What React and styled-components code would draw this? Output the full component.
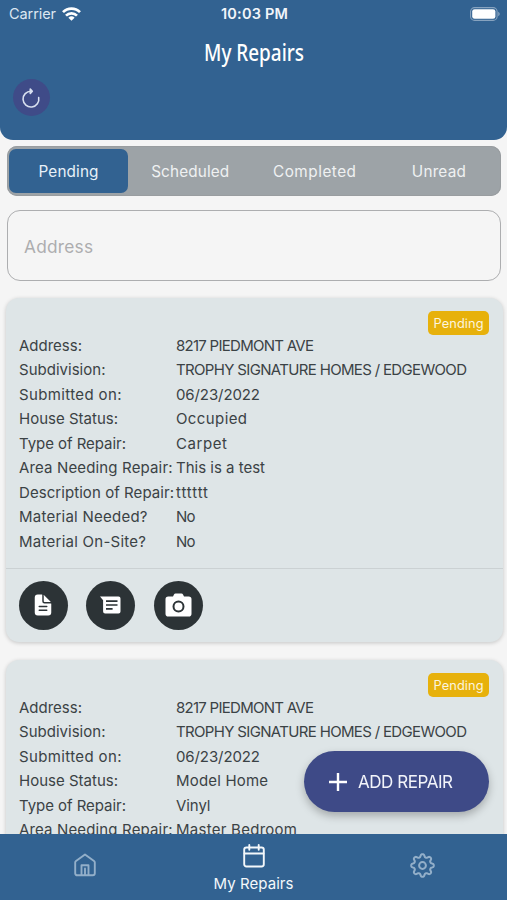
import React, { useLayoutEffect, useRef, useState } from "react";
import styled, { createGlobalStyle } from "styled-components";
import { IoDocumentText } from "react-icons/io5";

const Global = createGlobalStyle`
  * { box-sizing: border-box; }
  html, body { margin: 0; padding: 0; }
  body { background: #f5f5f5; font-family: Inter, "Liberation Sans", sans-serif; overflow: hidden; }
  button { font: inherit; border: 0; padding: 0; background: none; color: inherit; cursor: pointer; }
`;

const FitSpan = styled.span`
  display: inline-block;
  white-space: nowrap;
  transform-origin: 0 50%;
`;

/* Tracks or condenses a label so that it fills the given width. */
function Fit({ width, condense, children }) {
  const ref = useRef(null);
  const [style, setStyle] = useState({});
  useLayoutEffect(() => {
    const natural = ref.current.getBoundingClientRect().width;
    if (condense) {
      setStyle({ transform: `scaleX(${width / natural})`, marginRight: width - natural });
    } else {
      const gap = (width - natural) / (String(children).length - 1);
      setStyle({ letterSpacing: gap, marginRight: -gap });
    }
  }, [width, condense, children]);
  return <FitSpan ref={ref} style={style}>{children}</FitSpan>;
}

const Screen = styled.div`
  width: 507px;
  height: 900px;
  display: flex;
  flex-direction: column;
  overflow: hidden;
  background: #f5f5f5;
`;

const Header = styled.header`
  height: 140px;
  flex: none;
  background: #326291;
  color: #fff;
  border-radius: 0 0 13px 13px;
`;

const StatusBar = styled.div`
  display: grid;
  grid-template-columns: 1fr auto 1fr;
  align-items: center;
  height: 28px;
  padding: 0 7px 0 9px;
  font-size: 14.5px;
  line-height: 28px;
`;

const Carrier = styled.div`
  display: flex;
  align-items: center;
  gap: 6px;
  color: #dce7f1;
`;

const Clock = styled.div`
  font-weight: 600;
  color: #f1f5fa;
`;

const BatterySlot = styled.div`
  display: flex;
  justify-content: flex-end;
`;

const Title = styled.h1`
  margin: 6px 0 0;
  height: 37px;
  font: 500 23.5px/36px "Noto Sans", sans-serif;
  text-align: center;
`;

const RefreshButton = styled.button`
  display: flex;
  align-items: center;
  justify-content: center;
  width: 37px;
  height: 37px;
  margin: 8px 0 0 13px;
  padding-right: 1px;
  border-radius: 50%;
  background: #3f4b88;
`;

const Tabs = styled.nav`
  flex: none;
  display: grid;
  grid-template-columns: 119px repeat(3, 1fr);
  height: 50px;
  margin: 6px 6px 0 7px;
  padding: 3px 0 3px 2px;
  border-radius: 10px;
  background: #9da3a7;
  box-shadow: inset 0 0 0 1px #999da0;
`;

const Tab = styled.button`
  height: 44px;
  border-radius: 7px;
  color: ${(p) => (p.$active ? "#e8f1f8" : "#eff1f2")};
  background: ${(p) => (p.$active ? "#326291" : "transparent")};
  font-size: 15.3px;
  line-height: 45px;
`;

const SearchField = styled.div`
  flex: none;
  display: flex;
  align-items: center;
  height: 71px;
  margin: 14px 6px 0 7px;
  padding: 1px 0 0 16px;
  border: 1px solid #adaeb0;
  border-radius: 13px;
  color: #adadaf;
  font-size: 17.3px;
`;

const CardList = styled.main`
  flex: 1;
  min-height: 0;
  overflow: hidden;
  display: flex;
  flex-direction: column;
  gap: 18px;
  padding: 17px 4px 0 6px;
`;

const Card = styled.article`
  flex: none;
  height: 344px;
  border-radius: 13px;
  background: #dee5e7;
  box-shadow: 0 1px 4px rgba(0, 0, 0, 0.2);
`;

const CardTop = styled.div`
  display: flex;
  justify-content: flex-end;
  padding: 13px 14px 0 0;
`;

const Badge = styled.span`
  display: flex;
  align-items: center;
  justify-content: center;
  width: 61px;
  height: 24px;
  border-radius: 5px;
  background: #e7b10c;
  color: #fcf5df;
  font-size: 12.8px;
`;

const Details = styled.dl`
  display: grid;
  grid-template-columns: 157px 1fr;
  grid-auto-rows: 24.45px;
  margin: -1px 0 0;
  padding: 0 0 0 13px;
  color: #3b4245;
  font-size: 15px;
  line-height: 24.45px;
`;

const Label = styled.dt`
  white-space: nowrap;
`;

const Value = styled.dd`
  margin: 0;
  white-space: nowrap;
`;

const Actions = styled.div`
  display: flex;
  gap: 18.4px;
  margin-top: 14px;
  padding: 12px 13px;
  border-top: 1px solid #cbd1d3;
`;

const RoundAction = styled.button`
  display: flex;
  align-items: center;
  justify-content: center;
  width: 49px;
  height: 49px;
  padding-right: ${(p) => p.$nudge || 0}px;
  border-radius: 50%;
  background: #2c3336;
  color: #fff;
`;

const AddButton = styled.button`
  position: fixed;
  left: 304px;
  top: 751px;
  display: flex;
  align-items: center;
  width: 185px;
  height: 61px;
  padding-left: 25px;
  gap: 11px;
  border-radius: 31px;
  background: #3e4a87;
  color: #f2f4fa;
  font-size: 17px;
  box-shadow: 0 4px 9px rgba(0, 0, 0, 0.26);
`;

const BottomNav = styled.nav`
  flex: none;
  display: grid;
  grid-template-columns: repeat(3, 1fr);
  height: 66px;
  background: #326291;
`;

const NavItem = styled.button`
  display: flex;
  flex-direction: column;
  align-items: center;
  justify-content: flex-start;
  padding-top: ${(p) => (p.$active ? 10 : 19)}px;
  gap: 5px;
  color: ${(p) => (p.$active ? "#f4f8fb" : "#93afc9")};
  font-size: 15px;
  line-height: 22px;
`;

const Wifi = () => (
  <svg width="19" height="14" viewBox="0 0 19 14" fill="none" stroke="#fff" strokeWidth="2.7">
    <path d="M1 5.1a12 12 0 0 1 17 0M4 8.6a7.8 7.8 0 0 1 11 0" />
    <path d="M9.5 13.7 6.4 10.7a4.5 4.5 0 0 1 6.2 0Z" fill="#fff" stroke="none" />
  </svg>
);

const Battery = () => (
  <svg width="30" height="14" viewBox="0 0 30 14">
    <rect x="0.6" y="0.6" width="26.5" height="12.8" rx="4" fill="none" stroke="#87a3bf" strokeWidth="1.1" />
    <rect x="2.2" y="2.2" width="23.2" height="9.6" rx="2.4" fill="#fff" />
    <path d="M28.2 4.8c2 .8 2 3.6 0 4.4Z" fill="#87a3bf" />
  </svg>
);

const Refresh = () => (
  <svg width="20" height="22" viewBox="0 0 20 22" fill="none" stroke="#d8e0f0" strokeWidth="1.6" strokeLinecap="round" strokeLinejoin="round">
    <path d="M17.700 10.600A7.900 7.900 0 1 1 10 4.200" />
    <path d="M9.300 2 11.300 4.200 9.300 6.400Z" fill="#d8e0f0" />
  </svg>
);

const Chat = () => (
  <svg width="21" height="18" viewBox="0 0 21 18">
    <path d="M0 .5h18.500a2 2 0 0 1 2 2v13a2 2 0 0 1-2 2H5.100a2 2 0 0 1-2-2V4.300Z" fill="#fff" />
    <path d="M6 5.100h11.500M6 9h11.500M6 12.900h6.600" stroke="#2c3336" strokeWidth="1.700" />
  </svg>
);

const Camera = () => (
  <svg width="27" height="24" viewBox="0 0 27 24">
    <path d="M9 1.500Q9.500.5 10.500.5h6q1 0 1.500 1l1 2h4.700a2.800 2.800 0 0 1 2.800 2.800v14.400a2.800 2.800 0 0 1-2.800 2.800H3.300a2.800 2.800 0 0 1-2.800-2.800V6.300a2.800 2.800 0 0 1 2.800-2.800H8Z" fill="#fff" />
    <circle cx="13.500" cy="13.500" r="5" fill="#fff" stroke="#2c3336" strokeWidth="2" />
  </svg>
);

const Plus = () => (
  <svg width="18" height="18" viewBox="0 0 18 18" stroke="#fff" strokeWidth="2.400">
    <path d="M0 9h18M9 0v18" />
  </svg>
);

const Home = () => (
  <svg width="22" height="24" viewBox="0 0 22 24" fill="none" stroke="currentColor" strokeWidth="1.900" strokeLinecap="round" strokeLinejoin="round">
    <path d="M1.200 9.600a2 2 0 0 1 .8-1.600L11 1.500 20 8a2 2 0 0 1 .8 1.600v10.700a2 2 0 0 1-2 2H3.200a2 2 0 0 1-2-2Z" />
    <path d="M7.500 22V12.200h7V22M11 15.500v6" />
  </svg>
);

const Calendar = () => (
  <svg width="22" height="24" viewBox="0 0 22 24" fill="none" stroke="currentColor" strokeWidth="1.900" strokeLinecap="round">
    <rect x="1.200" y="3.500" width="19.600" height="19" rx="2.200" />
    <path d="M1.500 9.500h19M6.300 1v4.700M15.700 1v4.700" />
  </svg>
);

const gearPath = (() => {
  const pts = [];
  for (let i = 0; i <= 160; i += 1) {
    const a = (i / 160) * Math.PI * 2;
    const r = 9.9 + 1.5 * Math.tanh(1.6 * Math.cos(8 * a));
    pts.push(`${(12.5 + r * Math.sin(a)).toFixed(2)} ${(12.5 - r * Math.cos(a)).toFixed(2)}`);
  }
  return `M${pts.join("L")}Z`;
})();

const Gear = () => (
  <svg width="25" height="25" viewBox="0 0 25 25" fill="none" stroke="currentColor" strokeWidth="2" strokeLinejoin="round">
    <path d={gearPath} />
    <circle cx="12.500" cy="12.500" r="3.400" />
  </svg>
);

const tabs = [["Pending", 60], ["Scheduled", 78], ["Completed", 83], ["Unread", 54]];

const shared = [
  ["Address:", 63, "8217 PIEDMONT AVE", 138],
  ["Subdivision:", 86.5, "TROPHY SIGNATURE HOMES / EDGEWOOD", 291],
  ["Submitted on:", 102.5, "06/23/2022", 84],
];

const repairs = [
  [
    ...shared,
    ["House Status:", 99, "Occupied", 71],
    ["Type of Repair:", 107, "Carpet", 51],
    ["Area Needing Repair:", 153.5, "This is a test", 89],
    ["Description of Repair:", 155, "tttttt", 32],
    ["Material Needed?", 128.5, "No", 19.5],
    ["Material On-Site?", 127, "No", 19.5],
  ],
  [
    ...shared,
    ["House Status:", 99, "Model Home", 92],
    ["Type of Repair:", 107, "Vinyl", 34.5],
    ["Area Needing Repair:", 153.5, "Master Bedroom", 121],
  ],
];

function RepairCard({ rows }) {
  return (
    <Card>
      <CardTop>
        <Badge><Fit width={50}>Pending</Fit></Badge>
      </CardTop>
      <Details>
        {rows.map(([label, lw, value, vw]) => (
          <React.Fragment key={label}>
            <Label><Fit width={lw}>{label}</Fit></Label>
            <Value><Fit width={vw}>{value}</Fit></Value>
          </React.Fragment>
        ))}
      </Details>
      <Actions>
        <RoundAction aria-label="Document" $nudge={2}><IoDocumentText size={24} /></RoundAction>
        <RoundAction aria-label="Messages"><Chat /></RoundAction>
        <RoundAction aria-label="Photos"><Camera /></RoundAction>
      </Actions>
    </Card>
  );
}

export default function App() {
  return (
    <Screen>
      <Global />
      <Header>
        <StatusBar>
          <Carrier><Fit width={47}>Carrier</Fit><Wifi /></Carrier>
          <Clock><Fit width={67}>10:03 PM</Fit></Clock>
          <BatterySlot><Battery /></BatterySlot>
        </StatusBar>
        <Title><Fit width={100} condense>My Repairs</Fit></Title>
        <RefreshButton aria-label="Refresh"><Refresh /></RefreshButton>
      </Header>
      <Tabs>
        {tabs.map(([name, width], i) => (
          <Tab key={name} $active={i === 0}><Fit width={width}>{name}</Fit></Tab>
        ))}
      </Tabs>
      <SearchField><Fit width={69}>Address</Fit></SearchField>
      <CardList>
        {repairs.map((rows, i) => <RepairCard key={i} rows={rows} />)}
      </CardList>
      <BottomNav>
        <NavItem aria-label="Home"><Home /></NavItem>
        <NavItem $active><Calendar /><Fit width={80}>My Repairs</Fit></NavItem>
        <NavItem aria-label="Settings"><Gear /></NavItem>
      </BottomNav>
      <AddButton><Plus /><Fit width={95}>ADD REPAIR</Fit></AddButton>
    </Screen>
  );
}
